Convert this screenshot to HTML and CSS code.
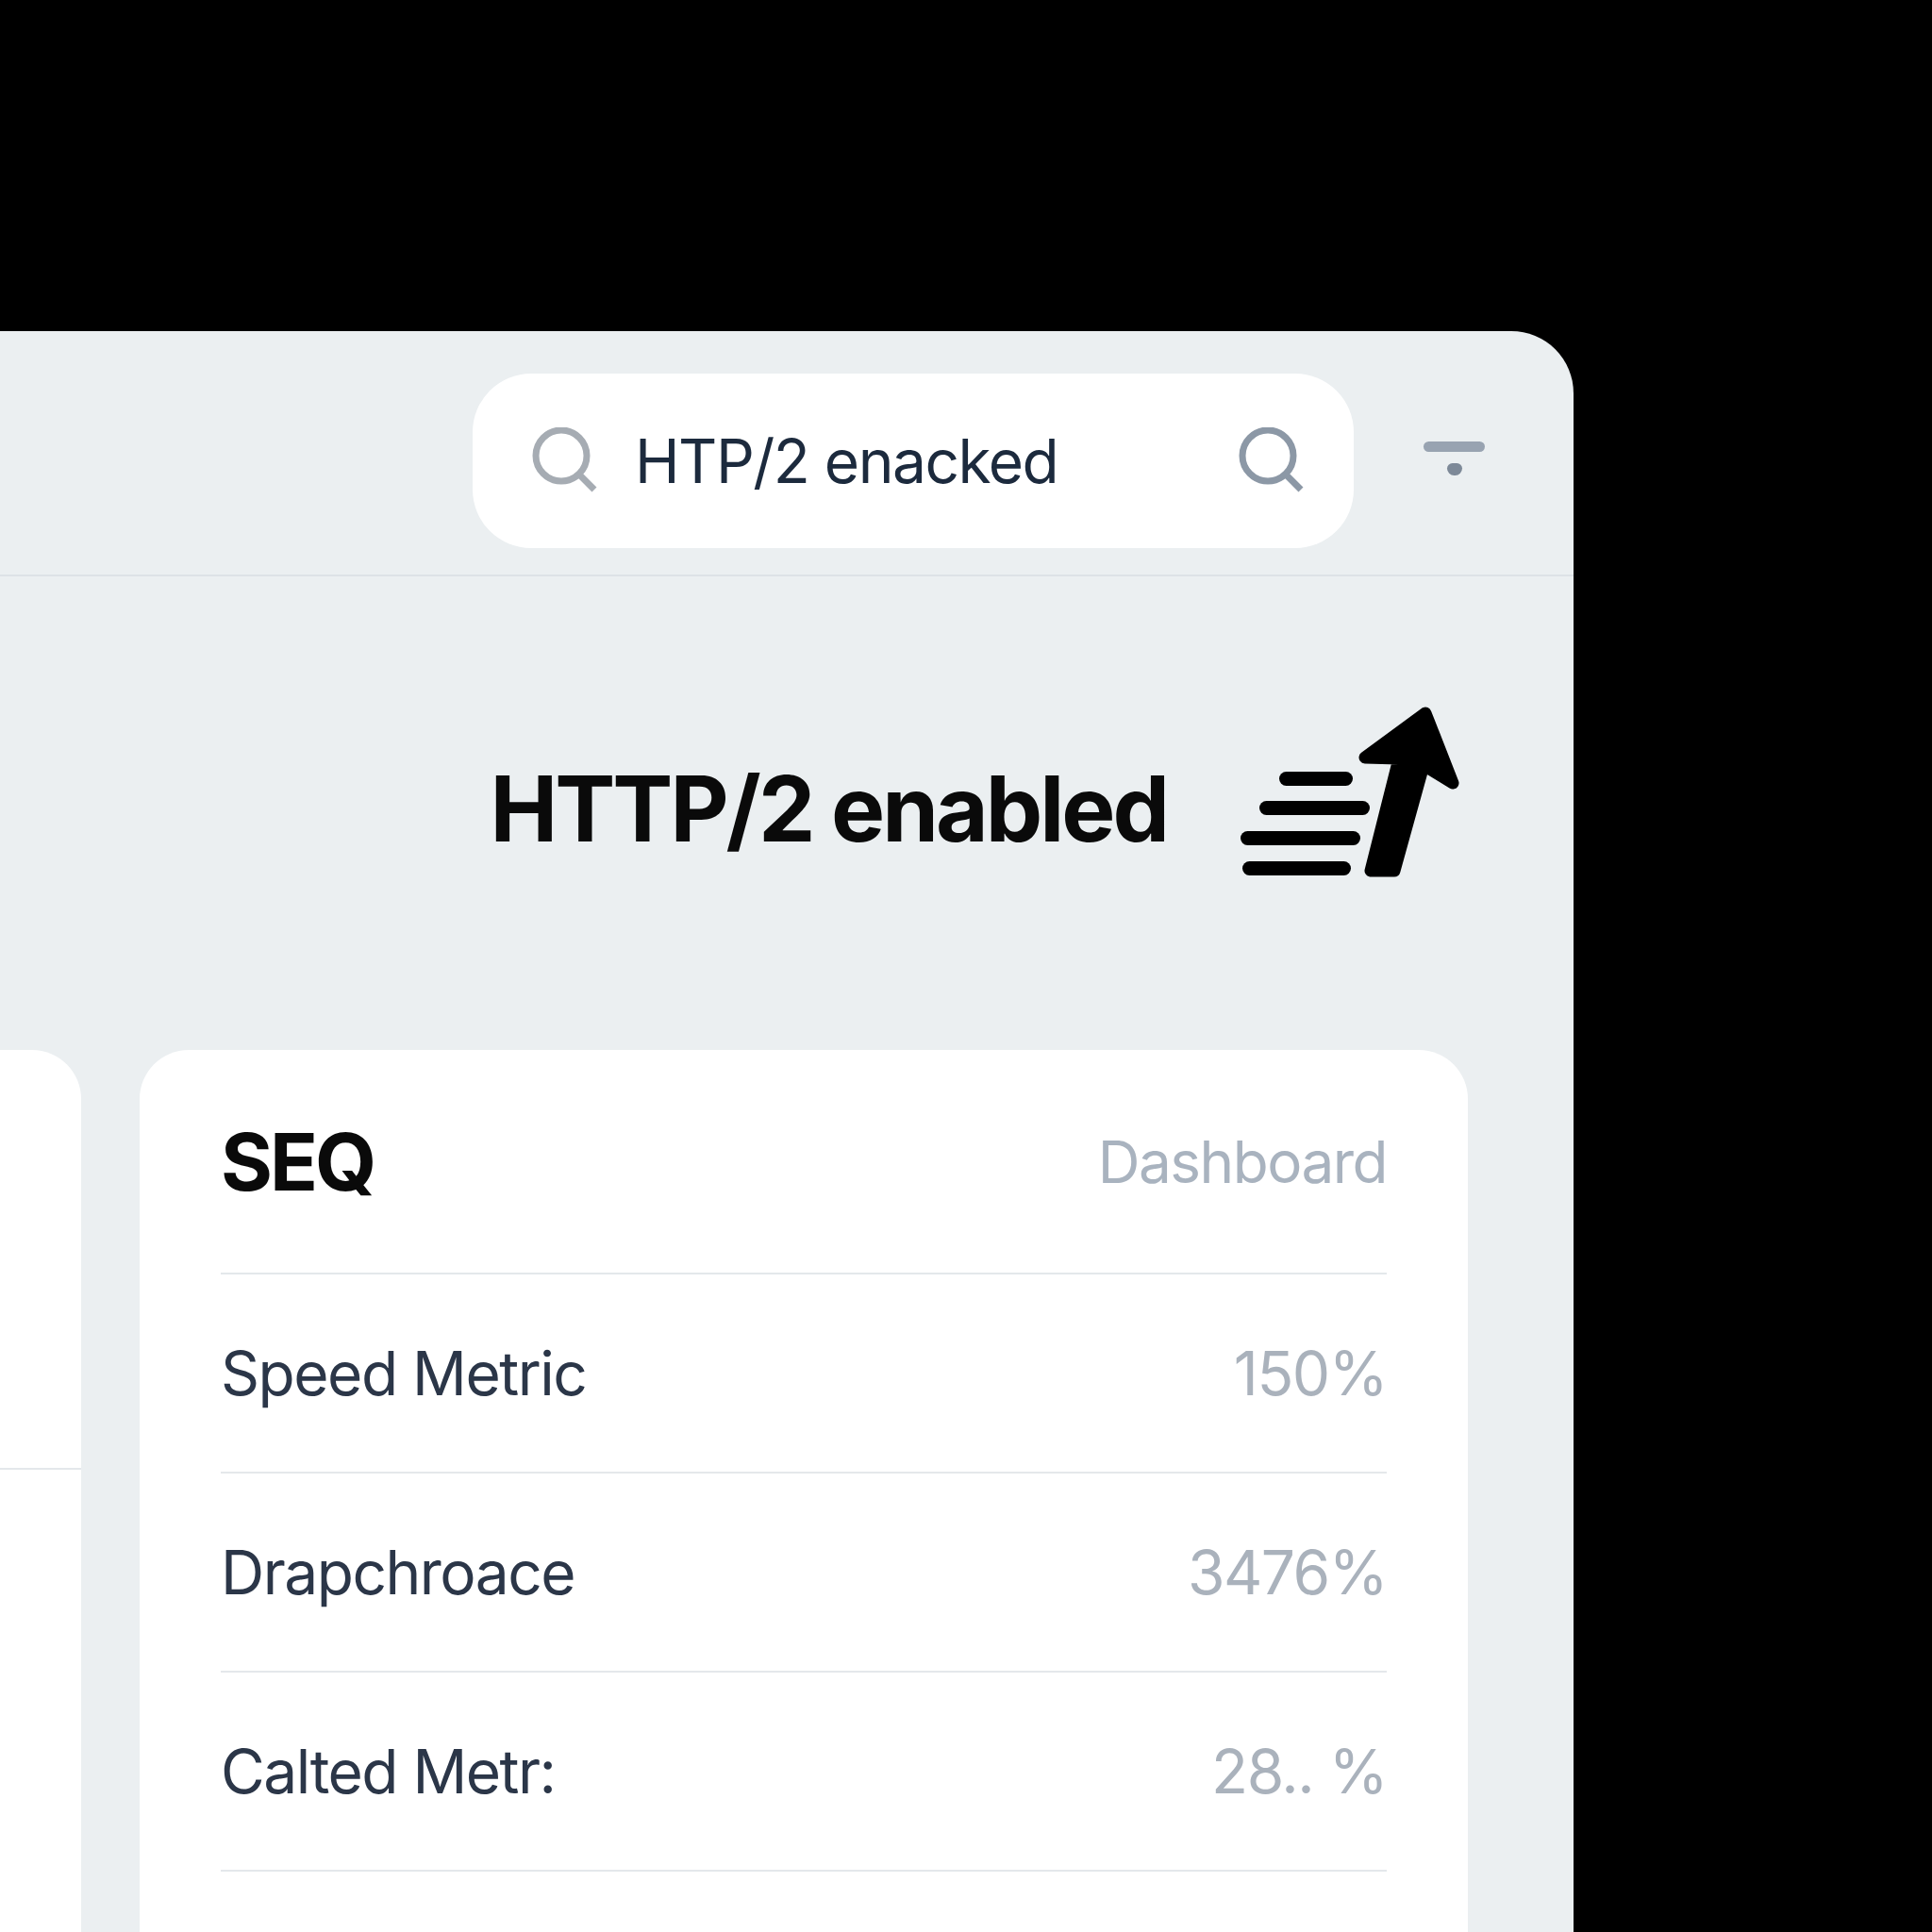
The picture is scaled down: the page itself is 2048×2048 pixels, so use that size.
FILE: index.html
```html
<!DOCTYPE html>
<html lang="en">
<head>
    <meta charset="UTF-8">
    <title>HTTP/2 enabled</title>
    <link rel="stylesheet" href="styles.css">
</head>
<body>

<div class="panel">
    <div class="topbar">
        <div class="search">
            <svg class="search-icon" viewBox="0 0 70 70">
                <circle cx="31" cy="30" r="27"/>
                <path d="M50 50 L66 66"/>
            </svg>
            <span class="search-text">HTP/2 enacked</span>
            <svg class="search-icon search-icon-end" viewBox="0 0 70 70">
                <circle cx="31" cy="30" r="27"/>
                <path d="M50 50 L66 66"/>
            </svg>
        </div>
        <div class="filter">
            <span class="filter-bar"></span>
            <span class="filter-dot"></span>
        </div>
    </div>

    <div class="headline">
        <h1>HTTP/2 enabled</h1>
        <svg class="speed-icon" viewBox="0 0 232 181">
            <rect x="41" y="69" width="78" height="15" rx="7.5"/>
            <rect x="20" y="100" width="117" height="15" rx="7.5"/>
            <rect x="0" y="132" width="127" height="15" rx="7.5"/>
            <rect x="2" y="164" width="115" height="15" rx="7.5"/>
            <path class="speed-arrow" d="M196 7 L132 54 L168 55 L138 174 L163 174 L194 62 L225 81 Z"/>
        </svg>
    </div>

    <div class="cards">
        <div class="card card-side">
            <div class="side-rule"></div>
        </div>
        <div class="card">
            <div class="card-head">
                <h2>SEQ</h2>
                <span class="card-link">Dashboard</span>
            </div>
            <div class="row">
                <span class="row-label">Speed Metric</span>
                <span class="row-value">150%</span>
            </div>
            <div class="row">
                <span class="row-label">Drapchroace</span>
                <span class="row-value">3476%</span>
            </div>
            <div class="row">
                <span class="row-label">Calted Metr:</span>
                <span class="row-value">28.. %</span>
            </div>
        </div>
    </div>
</div>

</body>
</html>
```

FILE: styles.css
```css
html, body {
    height: 2048px;
    margin: 0;
    overflow: hidden;
    background: #000;
    font-family: Inter, "Liberation Sans", sans-serif;
}

body {
    padding-top: 351px;
    box-sizing: border-box;
}

.panel {
    width: 1668px;
    height: 1697px;
    background: #ebeff1;
    border-top-right-radius: 66px;
    overflow: hidden;
}

/* Top bar */
.topbar {
    height: 260px;
    box-sizing: border-box;
    border-bottom: 2px solid #dde2e6;
    display: flex;
    align-items: center;
    justify-content: flex-end;
    padding: 0 94px 0 0;
}

.search {
    width: 934px;
    height: 185px;
    margin-top: 16px;
    box-sizing: border-box;
    background: #fff;
    border-radius: 62px;
    display: flex;
    align-items: center;
    padding: 0 52px 0 63px;
}

.search-icon {
    width: 70px;
    height: 70px;
    flex-shrink: 0;
    fill: none;
    stroke: #a6acb3;
    stroke-width: 7;
}

.search-icon-end {
    stroke: #8c98a6;
    margin-left: auto;
}

.search-text {
    margin-left: 39px;
    font-size: 64px;
    letter-spacing: -1.5px;
    color: #1c2a3d;
}

.filter {
    width: 65px;
    margin-left: 74px;
    margin-top: 12px;
    display: flex;
    flex-direction: column;
    align-items: center;
    gap: 12px;
}

.filter-bar {
    width: 100%;
    height: 11px;
    border-radius: 6px;
    background: #98a3b1;
}

.filter-dot {
    width: 16px;
    height: 13px;
    border-radius: 6px 6px 8px 8px;
    background: #7d8998;
}

/* Headline */
.headline {
    height: 502px;
    box-sizing: border-box;
    display: flex;
    align-items: flex-start;
    justify-content: flex-end;
    padding: 138px 121px 0 0;
}

.headline h1 {
    margin: 50px 78px 0 0;
    font-size: 96px;
    line-height: 116px;
    font-weight: 700;
    letter-spacing: -3px;
    color: #0a0a0a;
}

.speed-icon {
    width: 232px;
    height: 181px;
    fill: #000;
}

.speed-arrow {
    stroke: #000;
    stroke-width: 13;
    stroke-linejoin: round;
}

/* Cards */
.cards {
    display: flex;
    justify-content: flex-end;
    gap: 62px;
    padding-right: 112px;
}

.card {
    width: 1408px;
    height: 1000px;
    flex-shrink: 0;
    box-sizing: border-box;
    padding: 0 86px;
    background: #fff;
    border-radius: 52px;
}

.card-side {
    padding: 0;
}

.side-rule {
    margin-top: 443px;
    height: 2px;
    background: #e4e8eb;
}

.card-head {
    height: 238px;
    box-sizing: border-box;
    border-bottom: 2px solid #e4e8eb;
    display: flex;
    align-items: center;
    justify-content: space-between;
}

.card-head h2 {
    margin: 0;
    font-size: 84px;
    font-weight: 700;
    letter-spacing: -3px;
    color: #0a0a0a;
}

.card-link {
    font-size: 62px;
    letter-spacing: -1.5px;
    color: #a9b3bf;
}

.row {
    height: 211px;
    box-sizing: border-box;
    border-bottom: 2px solid #e4e8eb;
    display: flex;
    align-items: center;
    justify-content: space-between;
}

.row-label {
    font-size: 64px;
    letter-spacing: -1.5px;
    color: #2b3648;
}

.row-value {
    font-size: 64px;
    letter-spacing: -1.5px;
    color: #aab2bc;
}
```
